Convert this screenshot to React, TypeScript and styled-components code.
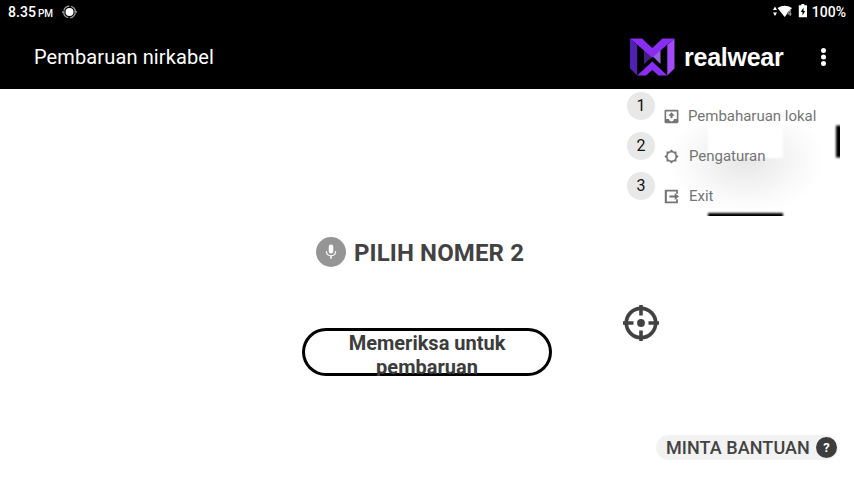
import React from "react";
import styled, { createGlobalStyle } from "styled-components";

const GlobalStyle = createGlobalStyle`
  * { box-sizing: border-box; }
  body { margin: 0; background: #fff; overflow: hidden; font-family: Roboto, sans-serif; }
`;

const Screen = styled.div`
  width: 854px;
  height: 480px;
  display: flex;
  flex-direction: column;
  background: #fff;
`;

const StatusBar = styled.div`
  height: 24px;
  padding: 0 8px;
  display: flex;
  align-items: center;
  background: #000;
  color: #fff;
  font-weight: 500;
  font-size: 14px;
  line-height: 24px;
`;
const Clock = styled.span`
  letter-spacing: 0.05px;
`;
const Meridiem = styled.span`
  font-size: 10px;
  margin: 3px 9px 0 2px;
  line-height: 21px;
`;
const StatusIcons = styled.div`
  margin-left: auto;
  display: flex;
  align-items: center;
`;
const Percent = styled.span`
  margin-left: 4px;
`;

const AppBar = styled.header`
  height: 65px;
  flex: none;
  padding: 0 17px 0 34px;
  display: flex;
  align-items: center;
  background: #000;
  color: #fff;
`;
const Title = styled.h1`
  margin: 0 auto 0 0;
  font-size: 20px;
  font-weight: 400;
  line-height: 24px;
  letter-spacing: 0.12px;
`;
const Brand = styled.div`
  display: flex;
  align-items: center;
  margin-right: 32px;
`;
const BrandName = styled.span`
  width: 101px;
  margin-left: 9px;
  font-family: "Liberation Sans", sans-serif;
  font-size: 25px;
  font-weight: 700;
  line-height: 28px;
  letter-spacing: -0.25px;
  white-space: nowrap;
`;

const Main = styled.main`
  position: relative;
  flex: 1;
  display: flex;
  flex-direction: column;
  align-items: center;
`;

const Menu = styled.ul`
  position: absolute;
  top: 0;
  right: 14px;
  width: 213px;
  height: 127px;
  margin: 0;
  padding: 7px 0 0;
  list-style: none;
`;
const MenuShadow = styled.svg`
  position: absolute;
  inset: 0;
`;
const MenuItem = styled.li<{ $indent: number }>`
  position: relative;
  height: 40px;
  display: flex;
  align-items: center;
  color: #757575;
  font-size: 15px;
  letter-spacing: -0.02px;

  & > svg {
    margin: 0 ${(p) => 8 + p.$indent}px 0 8px;
    flex: none;
  }
`;
const NumberBadge = styled.span`
  width: 28px;
  height: 28px;
  flex: none;
  margin-bottom: 20px;
  border-radius: 50%;
  background: #e8e8e8;
  color: #111;
  font-size: 16px;
  line-height: 28px;
  text-align: center;
`;

const VoicePrompt = styled.div`
  display: flex;
  align-items: center;
  margin: 148px 14px 0 0;
  height: 30px;
  color: #424242;
  font-size: 24px;
  font-weight: 700;
  letter-spacing: 0.12px;
`;
const PromptText = styled.span`
  line-height: 30px;
  padding-top: 2px;
`;
const MicBadge = styled.span`
  width: 30px;
  height: 30px;
  margin-right: 8px;
  border-radius: 50%;
  background: #959595;
  display: grid;
  place-items: center;
`;
const CheckButton = styled.button`
  width: 250px;
  height: 48px;
  margin-top: 61px;
  padding: 3px 40px 0;
  border: 0;
  border-radius: 24px;
  background: #fff;
  box-shadow: inset 0 0 0 3px #000;
  overflow: hidden;
  display: flex;
  align-items: flex-start;
  justify-content: center;
  color: #3c3c3c;
  font-family: inherit;
  font-size: 20px;
  font-weight: 700;
  line-height: 24px;
  text-align: center;
`;

const Crosshair = styled.svg`
  position: absolute;
  left: 623px;
  top: 216px;
`;
const HelpButton = styled.div`
  position: absolute;
  right: 16px;
  bottom: 20px;
  height: 25px;
  width: 182px;
  padding: 0 1px 0 10px;
  border-radius: 13px;
  background: #f2f2f2;
  display: flex;
  align-items: center;
  justify-content: space-between;
  color: #424242;
  font-size: 18px;
  font-weight: 500;
  line-height: 25px;
  letter-spacing: 0.07px;
  white-space: nowrap;
`;
const HelpMark = styled.span`
  width: 21px;
  height: 21px;
  border-radius: 50%;
  background: #3d3d3d;
  color: #fff;
  font-size: 13px;
  font-weight: 700;
  line-height: 21px;
  text-align: center;
`;

const menuItems = [
  {
    label: "Pembaharuan lokal",
    indent: 0,
    icon: (
      <path
        fillRule="evenodd"
        d="M20 2.500H4A1.800 1.800 0 0 0 2.200 4.300v15.400A1.800 1.800 0 0 0 4 21.500h16a1.800 1.800 0 0 0 1.800-1.800V4.300A1.800 1.800 0 0 0 20 2.500zM19.500 15.500h-4a3.500 3.500 0 0 1-7 0h-4V4.800h15zM7.500 11h3v3.500h3V11h3L12 6z"
      />
    ),
  },
  {
    label: "Pengaturan",
    indent: 1,
    icon: (
      <path
        fillRule="evenodd"
        d="M19 14.900 22 12 19 9.100V5h-4.100L12 2 9.100 5H5v4.100L2 12l3 2.900V19h4.100l2.900 3 2.900-3H19zM12 17.500a5.500 5.500 0 1 1 0-11 5.500 5.500 0 0 1 0 11z"
      />
    ),
  },
  {
    label: "Exit",
    indent: 1,
    icon: <path d="M21 8V2.500H2.500v19H21V16h-2.500v3h-13V5h13v3zM9 10.500h7.500V7l6 5-6 5v-3.500H9z" />,
  },
];

export default function App() {
  return (
    <Screen>
      <GlobalStyle />
      <StatusBar>
        <Clock>8.35</Clock>
        <Meridiem>PM</Meridiem>
        <svg width="15" height="14" viewBox="0 0 15 14">
          <circle cx="7.500" cy="7" r="5.800" fill="none" stroke="#999" strokeWidth="1.3" strokeDasharray="7.400 1.700" strokeDashoffset="-1" />
          <circle cx="7.500" cy="7" r="4" fill="#fff" />
          <path d="M0 7h2.500M12.500 7H15" stroke="#ddd" />
        </svg>
        <StatusIcons>
          <svg width="37" height="16" viewBox="0 0 37 16" fill="#fff">
            <path d="M2 6 4 2.500 6 6zM2 8.500h4L4 12z" />
            <path d="M6.500 4Q13.500-.500 21 4L13.700 13z" />
            <path d="M16.500 8.500 20 5v8h-2.500v-2h-2z" fill="#000" />
            <path d="M19.200 5.500V12M19.200 6l-2.500 4h4" fill="none" stroke="#ccc" strokeWidth=".8" />
            <path d="M27.800 1.200h2.500V0h3v1.200H36v12H27.800z" />
            <path d="M32.500 3.500 29.800 8h1.700v3.500L34.200 7h-1.700z" fill="#000" />
          </svg>
          <Percent>100%</Percent>
        </StatusIcons>
      </StatusBar>

      <AppBar>
        <Title>Pembaruan nirkabel</Title>
        <Brand>
          <svg width="45" height="38" viewBox="0 0 45 38">
            <path d="M0 .500v30l7.200 7V7z" fill="#4f21b0" />
            <path d="M44.500 .500v30l-7.200 7V7z" fill="#a24afa" />
            <path d="M14 11v15l8.200-8z" fill="#40207f" />
            <path d="M14 10h9v8.500l-4 3-5-5z" fill="#6a32cc" />
            <path d="M14 12v14l8.200-7z" fill="#40207f" />
            <path d="M30.500 11v15l-8.200-8z" fill="#9760dc" />
            <path d="M0 .500h12l10.250 9.500L32.500 .500h12L22.250 19.500z" fill="#8a2df2" />
            <path d="M7.200 37.500 22.250 23.500 37.300 37.500H28.500l-6.250-5.500-6.250 5.500z" fill="#8b2cf4" />
          </svg>
          <BrandName>realwear</BrandName>
        </Brand>
        <svg width="20" height="24" viewBox="0 0 20 24" fill="#fff">
          <circle cx="6.500" cy="5.500" r="2.500" />
          <circle cx="6.500" cy="12" r="2.500" />
          <circle cx="6.500" cy="18.500" r="2.500" />
        </svg>
      </AppBar>

      <Main>
        <VoicePrompt>
          <MicBadge>
            <svg width="18" height="18" viewBox="0 0 24 24" fill="#fff">
              <path d="M12 14c1.700 0 3-1.300 3-3V5a3 3 0 0 0-6 0v6c0 1.700 1.300 3 3 3zm5.300-3a5.300 5.300 0 0 1-10.600 0H5a7 7 0 0 0 6 6.700V21h2v-3.300A7 7 0 0 0 19 11z" />
            </svg>
          </MicBadge>
          <PromptText>PILIH NOMER 2</PromptText>
        </VoicePrompt>
        <CheckButton>Memeriksa untuk pembaruan</CheckButton>

        <Menu>
          <MenuShadow width="213" height="127" viewBox="0 0 213 127">
            <defs>
              <radialGradient id="shade">
                <stop offset="0" stopColor="#000" stopOpacity=".1" />
                <stop offset=".4" stopColor="#000" stopOpacity=".055" />
                <stop offset=".75" stopColor="#000" stopOpacity=".018" />
                <stop offset="1" stopColor="#000" stopOpacity="0" />
              </radialGradient>
              <filter id="soften" x="-50%" y="-20%" width="200%" height="140%">
                <feGaussianBlur stdDeviation="1" />
              </filter>
            </defs>
            <ellipse cx="119" cy="70" rx="80" ry="56" fill="url(#shade)" />
            <path d="M35 0h178v36H156v33H81V36H35z" fill="#fff" filter="url(#soften)" />
            <g filter="url(#soften)">
              <path d="M209 36.500H220v32h-11zM81 124h75V135H81z" />
            </g>
          </MenuShadow>
          {menuItems.map((item, index) => (
            <MenuItem key={item.label} $indent={item.indent}>
              <NumberBadge>{index + 1}</NumberBadge>
              <svg width="17" height="17" viewBox="0 0 24 24" fill="#757575">
                {item.icon}
              </svg>
              {item.label}
            </MenuItem>
          ))}
        </Menu>

        <Crosshair width="36" height="36" viewBox="0 0 36 36">
          <circle cx="18" cy="18" r="14.700" fill="none" stroke="#424242" strokeWidth="3.700" />
          <path d="M18 0v10.500M18 25.500V36M0 18h10.500M25.500 18H36" stroke="#424242" strokeWidth="3.600" />
          <circle cx="18" cy="18" r="3.900" fill="#424242" />
        </Crosshair>

        <HelpButton>
          MINTA BANTUAN
          <HelpMark>?</HelpMark>
        </HelpButton>
      </Main>
    </Screen>
  );
}
